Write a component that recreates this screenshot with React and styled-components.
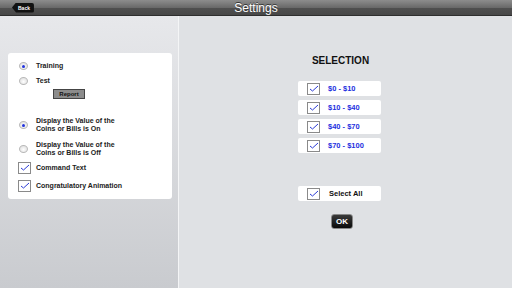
import React from 'react';
import styled, { createGlobalStyle } from 'styled-components';

const GlobalStyle = createGlobalStyle`
  html, body { margin: 0; padding: 0; }
  body {
    width: 512px;
    height: 288px;
    overflow: hidden;
    font-family: "Liberation Sans", Arial, sans-serif;
  }
`;

const Screen = styled.div`
  width: 512px;
  height: 288px;
  display: flex;
  flex-direction: column;
`;

const TopBar = styled.div`
  height: 16px;
  flex: none;
  display: grid;
  grid-template-columns: 1fr auto 1fr;
  align-items: center;
  background: linear-gradient(#8d8d8d, #6a6a6a 50%, #505050 51%, #474747);
  border-bottom: 1px solid #2e2e2e;
  box-sizing: border-box;
`;

const BackButton = styled.div`
  justify-self: start;
  margin-left: 12px;
  height: 10px;
  padding: 0 4px 0 6px;
  display: flex;
  align-items: center;
  background: #111;
  color: #fff;
  font-size: 5px;
  font-weight: bold;
  border-radius: 2px;
  clip-path: polygon(4px 0, 100% 0, 100% 100%, 4px 100%, 0 50%);
`;

const Title = styled.div`
  color: #fff;
  font-size: 12px;
  text-shadow: 0 -1px 0 #333;
`;

const Body = styled.div`
  flex: 1;
  display: flex;
`;

const LeftPane = styled.div`
  width: 179px;
  box-sizing: border-box;
  padding: 37px 7px 0 8px;
  background: linear-gradient(#e7e8eb, #c9cbcf);
  border-right: 1px solid #f4f5f6;
`;

const Card = styled.div`
  width: 164px;
  height: 146px;
  box-sizing: border-box;
  background: #fff;
  border-radius: 3px;
  padding: 8px 0 0 10px;
  display: flex;
  flex-direction: column;
`;

const Row = styled.div`
  display: flex;
  align-items: center;
  gap: ${p => p.$gap || 8}px;
  height: ${p => p.$h}px;
  margin-top: ${p => p.$mt || 0}px;
`;

const Label = styled.div`
  font-size: 7px;
  font-weight: bold;
  color: #222;
  line-height: 8px;
`;

const RadioDot = styled.div`
  width: 7px;
  height: 6px;
  margin-left: 1px;
  border-radius: 50%;
  background: radial-gradient(circle at 50% 60%, #fff, #d8d8d8);
  border: 1px solid #b9b9b9;
  display: flex;
  align-items: center;
  justify-content: center;
  &::after {
    content: '';
    width: 3px;
    height: 3px;
    border-radius: 50%;
    background: ${p => (p.$on ? '#2233dd' : 'transparent')};
  }
`;

const ReportButton = styled.div`
  margin: 3px 0 0 35px;
  width: 32px;
  height: 10px;
  box-sizing: border-box;
  background: #8c8c8c;
  border: 1px solid #444;
  font-size: 6px;
  font-weight: bold;
  color: #111;
  display: flex;
  align-items: center;
  justify-content: center;
`;

const Box = styled.div`
  width: 13px;
  height: 12px;
  box-sizing: border-box;
  border: 1px solid #8a8a8a;
  background: #fff;
  display: flex;
  align-items: center;
  justify-content: center;
  flex: none;
`;

const Tick = () => (
  <svg width="10" height="7" viewBox="0 0 10 7">
    <path d="M1 4 L3.5 6 L9 1" fill="none" stroke="#2b3bd6" strokeWidth="1" />
  </svg>
);

const CheckBox = () => (
  <Box>
    <Tick />
  </Box>
);

const RightPane = styled.div`
  flex: 1;
  background: #dfe1e4;
  display: flex;
  flex-direction: column;
  align-items: flex-start;
  padding: 39px 0 0 119px;
  box-sizing: border-box;
`;

const Heading = styled.div`
  width: 83px;
  text-align: center;
  font-size: 10px;
  font-weight: bold;
  color: #111;
  margin-left: 1px;
`;

const OptionList = styled.div`
  margin-top: 15px;
  display: flex;
  flex-direction: column;
  gap: 4px;
`;

const Option = styled.div`
  width: 83px;
  height: 15px;
  box-sizing: border-box;
  background: #fff;
  border-radius: 2px;
  display: flex;
  align-items: center;
  padding-left: 9px;
  gap: ${p => (p.$all ? 9 : 8)}px;
  margin-top: ${p => p.$mt || 0}px;
`;

const OptionText = styled.div`
  font-size: 7.5px;
  font-weight: bold;
  color: ${p => (p.$blue ? '#2430e0' : '#111')};
`;

const OkButton = styled.div`
  margin: 13px 0 0 33px;
  width: 22px;
  height: 15px;
  border-radius: 3px;
  background: linear-gradient(#3a3a3a, #0a0a0a);
  border: 1px solid #888;
  box-sizing: border-box;
  color: #fff;
  font-size: 8px;
  font-weight: bold;
  display: flex;
  align-items: center;
  justify-content: center;
`;

const ranges = ['$0 - $10', '$10 - $40', '$40 - $70', '$70 - $100'];

export default function App() {
  return (
    <Screen>
      <GlobalStyle />
      <TopBar>
        <BackButton>Back</BackButton>
        <Title>Settings</Title>
        <div />
      </TopBar>
      <Body>
        <LeftPane>
          <Card>
            <Row $h={10}>
              <RadioDot $on />
              <Label>Training</Label>
            </Row>
            <Row $h={10} $mt={5}>
              <RadioDot />
              <Label>Test</Label>
            </Row>
            <ReportButton>Report</ReportButton>
            <Row $h={16} $mt={18}>
              <RadioDot $on />
              <Label>
                Display the Value of the
                <br />
                Coins or Bills is On
              </Label>
            </Row>
            <Row $h={16} $mt={8}>
              <RadioDot />
              <Label>
                Display the Value of the
                <br />
                Coins or Bills is Off
              </Label>
            </Row>
            <Row $h={13} $mt={4} $gap={5}>
              <CheckBox />
              <Label>Command Text</Label>
            </Row>
            <Row $h={13} $mt={5} $gap={5}>
              <CheckBox />
              <Label>Congratulatory Animation</Label>
            </Row>
          </Card>
        </LeftPane>
        <RightPane>
          <Heading>SELECTION</Heading>
          <OptionList>
            {ranges.map(r => (
              <Option key={r}>
                <CheckBox />
                <OptionText $blue>{r}</OptionText>
              </Option>
            ))}
            <Option $all $mt={29}>
              <CheckBox />
              <OptionText>Select All</OptionText>
            </Option>
          </OptionList>
          <OkButton>OK</OkButton>
        </RightPane>
      </Body>
    </Screen>
  );
}
